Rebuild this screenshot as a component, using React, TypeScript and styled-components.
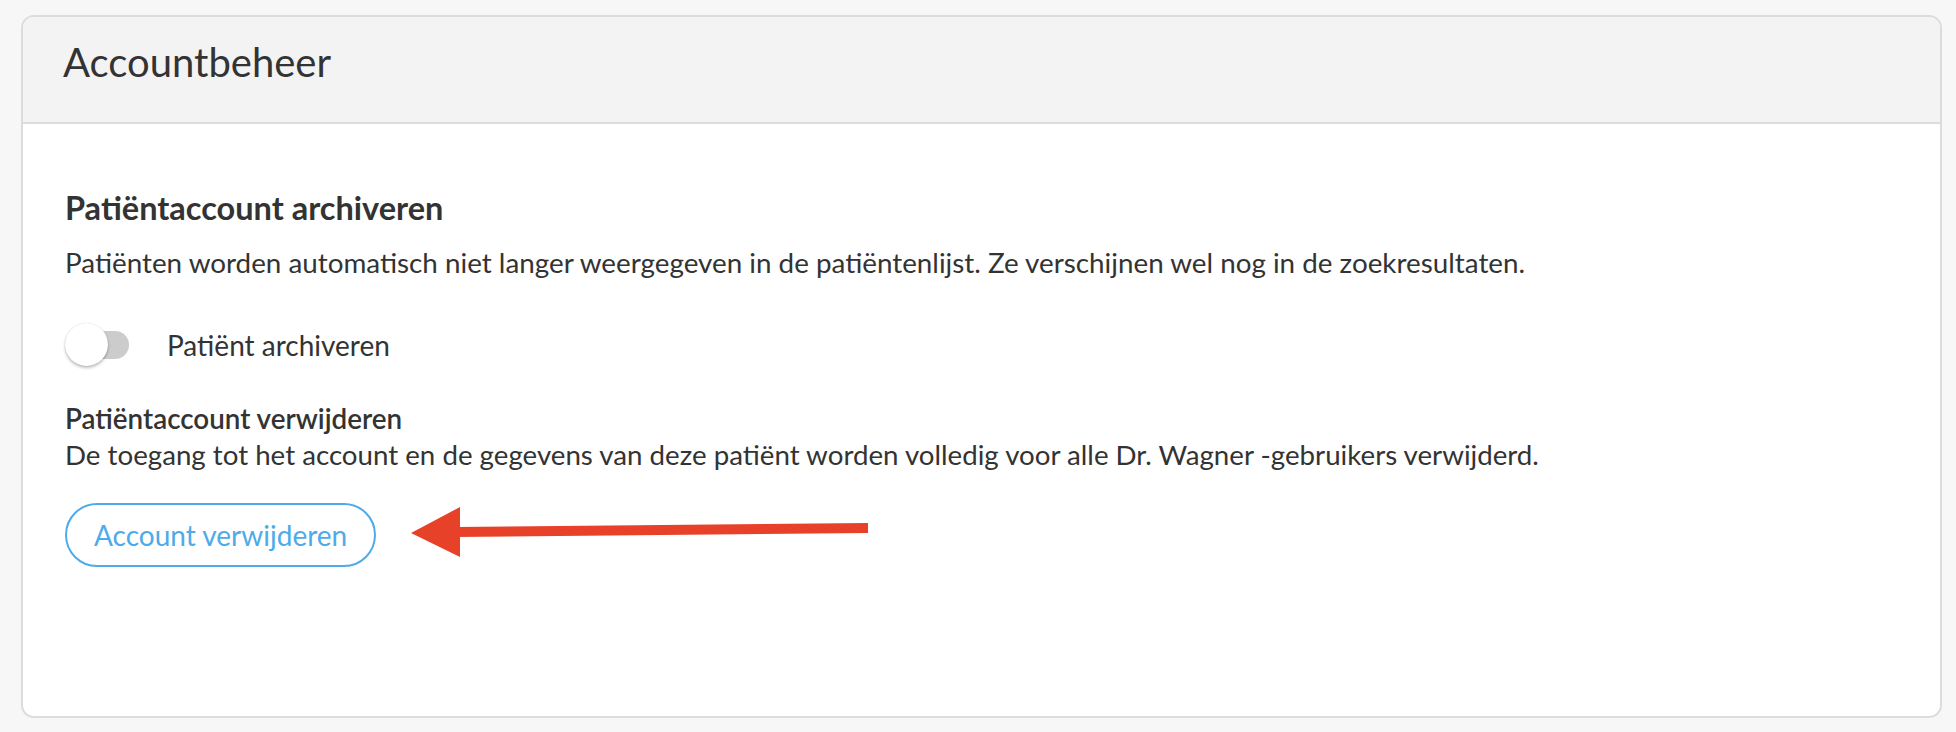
import React, { useState } from "react";
import styled, { createGlobalStyle } from "styled-components";

const GlobalStyle = createGlobalStyle`
  html, body {
    margin: 0;
    padding: 0;
    background: #f7f7f7;
    font-family: Lato, "Open Sans", "Liberation Sans", sans-serif;
    color: #333333;
  }
`;

const Page = styled.div`
  padding: 15px 14px 0 21px;
`;

const Card = styled.section`
  box-sizing: border-box;
  height: 703px;
  background: #ffffff;
  border: 2px solid #dcdcdc;
  border-radius: 13px;
  overflow: hidden;
  display: flex;
  flex-direction: column;
`;

const CardHeader = styled.header`
  box-sizing: border-box;
  height: 107px;
  padding: 21px 40px 0;
  background: #f3f3f3;
  border-bottom: 2px solid #dcdcdc;
`;

const CardTitle = styled.h1`
  margin: 0;
  font-size: 40px;
  line-height: 48px;
  font-weight: 400;
  color: #333333;
`;

const CardBody = styled.div`
  position: relative;
  flex: 1;
  padding: 65px 42px 0;
  display: flex;
  flex-direction: column;
  align-items: flex-start;
`;

const SectionTitle = styled.h2`
  margin: 0;
  font-size: 32.5px;
  line-height: 38px;
  font-weight: 700;
`;

const Text = styled.p<{ $gap?: number }>`
  margin: ${(p) => p.$gap ?? 0}px 0 0;
  font-size: 27.8px;
  line-height: 34px;
`;

const ToggleRow = styled.label`
  margin-top: 43px;
  display: flex;
  align-items: center;
  gap: 17px;
  cursor: pointer;
`;

const Track = styled.span<{ $on: boolean }>`
  position: relative;
  width: 64px;
  height: 43px;
  display: flex;
  align-items: center;
  justify-content: flex-end;

  &::before {
    content: "";
    width: 56px;
    height: 28px;
    border-radius: 14px;
    background: ${(p) => (p.$on ? "#9fd0f2" : "#cccccc")};
  }
`;

const Knob = styled.span<{ $on: boolean }>`
  position: absolute;
  top: 0;
  left: ${(p) => (p.$on ? "21px" : "0")};
  width: 43px;
  height: 43px;
  border-radius: 50%;
  background: ${(p) => (p.$on ? "#4dabe9" : "#ffffff")};
  box-shadow: 0 2px 3px rgba(0, 0, 0, 0.25), 0 0 1px rgba(0, 0, 0, 0.2);
`;

const ToggleLabel = styled.span`
  margin-left: 21px;
  font-size: 28px;
  line-height: 34px;
`;

const SubTitle = styled.h3`
  margin: 35px 0 0;
  font-size: 27.8px;
  line-height: 36px;
  font-weight: 600;
`;

const SubText = styled.p`
  margin: 0;
  font-size: 27.7px;
  line-height: 36px;
`;

const OutlineButton = styled.button`
  box-sizing: border-box;
  margin-top: 30px;
  height: 64px;
  padding: 0 27px;
  border: 2px solid #4dabe9;
  border-radius: 32px;
  background: #ffffff;
  color: #4dabe9;
  font-family: inherit;
  font-size: 28px;
  cursor: pointer;
`;

const Pointer = styled.svg`
  position: absolute;
  left: 382px;
  top: 376px;
  pointer-events: none;
`;

export default function App() {
  const [archived, setArchived] = useState(false);

  return (
    <>
      <GlobalStyle />
      <Page>
        <Card>
          <CardHeader>
            <CardTitle>Accountbeheer</CardTitle>
          </CardHeader>
          <CardBody>
            <SectionTitle>Patiëntaccount archiveren</SectionTitle>
            <Text $gap={19}>
              Patiënten worden automatisch niet langer weergegeven in de patiëntenlijst. Ze verschijnen wel nog in de
              zoekresultaten.
            </Text>
            <ToggleRow onClick={() => setArchived(!archived)}>
              <Track $on={archived}>
                <Knob $on={archived} />
              </Track>
              <ToggleLabel>Patiënt archiveren</ToggleLabel>
            </ToggleRow>
            <SubTitle>Patiëntaccount verwijderen</SubTitle>
            <SubText>
              De toegang tot het account en de gegevens van deze patiënt worden volledig voor alle Dr. Wagner
              -gebruikers verwijderd.
            </SubText>
            <OutlineButton>Account verwijderen</OutlineButton>
            <Pointer width="470" height="65" viewBox="0 0 470 65">
              <polygon points="50,27 463,23 463,33 50,37" fill="#e8412a" />
              <polygon points="6,33 55,7 55,57" fill="#e8412a" />
            </Pointer>
          </CardBody>
        </Card>
      </Page>
    </>
  );
}
